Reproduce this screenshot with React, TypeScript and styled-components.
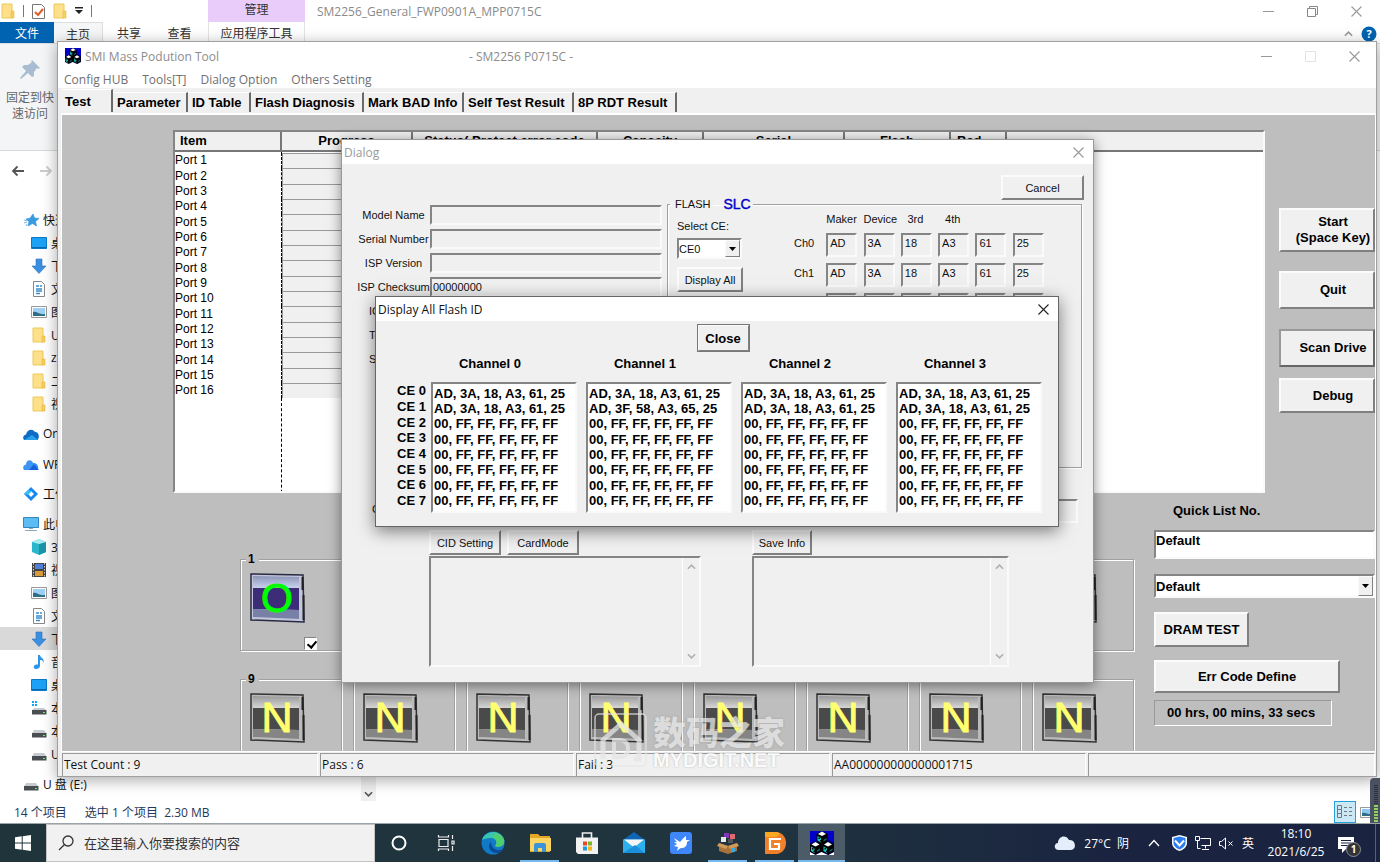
import React from "react";
import styled, { createGlobalStyle, css } from "styled-components";

const uiFont = `"Open Sans", "Noto Sans CJK SC", sans-serif`;
const dlgFont = `"Liberation Sans", "Noto Sans CJK SC", sans-serif`;

const Global = createGlobalStyle`
  * { box-sizing: border-box; }
  html, body { margin: 0; height: 100%; overflow: hidden; }
  body { font-family: ${uiFont}; font-size: 12px; color: #111; }
  button, input, select, textarea { font: inherit; color: inherit; margin: 0; border-radius: 0; }
  svg { display: block; flex: none; }
`;

const sunken = css`
  border: 2px solid;
  border-color: #858585 #fafafa #fafafa #858585;
`;
const raised = css`
  border: 2px solid;
  border-color: #fbfbfb #808080 #808080 #fbfbfb;
`;

/* ---------- desktop ---------- */
const Desktop = styled.div`
  position: relative;
  display: flex;
  flex-direction: column;
  height: 100vh;
  overflow: hidden;
  background: #fff;
`;
const Explorer = styled.section`
  flex: 1;
  min-height: 0;
  display: flex;
  flex-direction: column;
`;
const ExpTitle = styled.header`
  display: flex;
  align-items: center;
  height: 22px;
  color: #8a8a8a;
`;
const QuickBar = styled.div`
  display: flex;
  align-items: center;
  gap: 8px;
  width: 208px;
  padding-left: 1px;
`;
const Sep = styled.i`
  width: 1px;
  height: 12px;
  background: #777;
`;
const ToolTab = styled.div`
  width: 97px;
  height: 22px;
  line-height: 19px;
  text-align: center;
  background: #e9ccfa;
  color: #333;
`;
const ExpName = styled.div`
  flex: 1;
  padding-left: 12px;
`;
const WinControls = styled.div<{ $end: number }>`
  display: flex;
  gap: 24px;
  margin-right: ${(p) => p.$end}px;
`;
const IconButton = styled.button`
  display: flex;
  align-items: center;
  justify-content: center;
  width: 20px;
  height: 20px;
  padding: 0;
  border: 0;
  background: none;
`;
const ExpTabs = styled.nav`
  display: flex;
  height: 21px;
  line-height: 24px;
`;
const ExpTab = styled.button<{ $w: number; $kind?: "file" | "on" | "tool" }>`
  width: ${(p) => p.$w}px;
  padding: 0;
  border: 0;
  background: #fff;
  color: #333;
  ${(p) => p.$kind === "file" && "background:#0063b1;color:#fff;"}
  ${(p) => p.$kind === "on" && "background:#f5f6f7;border-right:1px solid #ddd;border-top:1px solid #ddd;"}
  ${(p) => p.$kind === "tool" && "border:1px solid #e4e4e4;border-width:0 1px;margin-left:4px;"}
`;
const TabsEnd = styled.div`
  flex: 1;
  display: flex;
  justify-content: flex-end;
  align-items: center;
  gap: 8px;
  padding: 3px 3px 0 0;
`;
const Ribbon = styled.div`
  height: 108px;
  border-top: 1px solid #ddd;
  border-bottom: 1px solid #d8d8d8;
  background: #f4f5f6;
`;
const PinTool = styled.div`
  display: flex;
  flex-direction: column;
  align-items: center;
  width: 60px;
  padding-top: 15px;
  gap: 9px;
  color: #666;
  line-height: 16px;
  text-align: center;
`;
const NavRow = styled.div`
  display: flex;
  gap: 14px;
  height: 57px;
  padding: 13px 11px;
`;
const Tree = styled.ul`
  flex: 1;
  min-height: 0;
  width: 360px;
  margin: 0;
  padding: 0;
  list-style: none;
`;
const TreeItem = styled.li<{ $deep?: boolean; $gap?: boolean; $on?: boolean }>`
  display: flex;
  align-items: center;
  gap: 4px;
  height: 23px;
  margin-top: ${(p) => (p.$gap ? 7 : 0)}px;
  padding-left: ${(p) => (p.$deep ? 31 : 23)}px;
  background: ${(p) => (p.$on ? "#d9d9d9" : "transparent")};
`;
const ExpFoot = styled.footer`
  display: flex;
  align-items: center;
  height: 23px;
  color: #1e395b;
`;
const FootText = styled.span<{ $pad: number }>`
  padding-left: ${(p) => p.$pad}px;
`;
const FootRight = styled.div`
  margin-left: auto;
  display: flex;
  align-items: flex-end;
  gap: 4px;
  height: 22px;
`;
const ViewBtn = styled.button`
  display: flex;
  align-items: center;
  justify-content: center;
  width: 22px;
  height: 22px;
  padding: 0;
  border: 1px solid #26a0da;
  background: #cbe8f6;
`;
const Meter = styled.div`
  position: absolute;
  right: 0;
  bottom: 39px;
  width: 10px;
  height: 45px;
  padding: 7px 2px 1px 4px;
  border-radius: 4px 0 0 0;
  background: #4a5160;
`;
const ScrollHint = styled.div`
  position: absolute;
  left: 361px;
  bottom: 61px;
  width: 15px;
  height: 25px;
  display: flex;
  align-items: flex-end;
  justify-content: center;
  padding-bottom: 4px;
  background: #f0f0f0;
`;

/* ---------- main tool window ---------- */
const MainWin = styled.section`
  position: absolute;
  left: 57px;
  right: 3px;
  top: 41px;
  bottom: 85px;
  display: flex;
  flex-direction: column;
  border: 1px solid #a0a0a0;
  background: #f0f0f0;
  box-shadow: 0 3px 14px rgba(0, 0, 0, 0.35);
`;
const MainTitle = styled.header`
  display: flex;
  align-items: center;
  gap: 4px;
  height: 28px;
  padding-left: 7px;
  background: #fff;
  color: #8c8c8c;
`;
const TitleName = styled.span`
  width: 380px;
`;
const TitleRev = styled.span`
  flex: 1;
`;
const MenuBar = styled.nav`
  display: flex;
  gap: 14px;
  height: 18px;
  padding-left: 6px;
  line-height: 20px;
  background: #fff;
  color: #6f6f6f;
`;
const MenuItem = styled.button`
  padding: 0;
  border: 0;
  background: none;
`;
const TabStrip = styled.div`
  display: flex;
  align-items: flex-end;
  height: 24px;
  padding-left: 4px;
  font: bold 13px ${dlgFont};
`;
const Tab = styled.button<{ $w: number; $on?: boolean }>`
  width: ${(p) => p.$w}px;
  height: ${(p) => (p.$on ? 23 : 20)}px;
  padding: 0 0 0 ${(p) => (p.$on ? 3 : 4)}px;
  text-align: left;
  border: 0;
  border-right: 2px solid #6a6a6a;
  border-top: 1px solid #fff;
  background: #f0f0f0;
  color: #000;
  white-space: nowrap;
  line-height: 19px;
`;
const Page = styled.div`
  flex: 1;
  min-height: 0;
  display: flex;
  flex-direction: column;
  margin: 1px 0 0 3px;
  padding: 15px 0 0 0;
  border: solid #fff;
  border-width: 2px 1px 1px 1px;
  overflow: hidden;
  background: #bebebe;
  font: bold 13px ${dlgFont};
  color: #000;
`;
const TopArea = styled.div`
  display: flex;
  gap: 14px;
  margin-left: 111px;
`;
const ListView = styled.div`
  flex: 1;
  min-width: 0;
  height: 363px;
  overflow: hidden;
  ${sunken}
  background: #fff;
`;
const PortTable = styled.table`
  width: 100%;
  table-layout: fixed;
  border-collapse: separate;
  border-spacing: 0;
  th {
    height: 20px;
    padding: 0;
    line-height: 16px;
    font-size: 13px;
    border-right: 2px solid #777;
    border-bottom: 2px solid #777;
    background: #f0f0f0;
    white-space: nowrap;
    overflow: hidden;
  }
  th:first-child { text-align: left; padding-left: 5px; }
  th:nth-child(7) { text-align: left; padding-left: 6px; }
  th:last-child { border-right: 0; }
  td { padding: 0; height: 15px; line-height: 15px; font-weight: normal; font-size: 12px; }
  tr:nth-child(3n) td { height: 16px; }
  td:first-child { border-right: 1px dashed #000; }
  td.bar { background: #f0f0f0; border-top: 1px solid #999; border-left: 1px solid #999; }
  tr.lead td { height: 1px; }
  tr.fill td { height: 110px; }
`;
const Actions = styled.div`
  display: flex;
  flex-direction: column;
  width: 96px;
  padding-top: 78px;
`;
const BigBtn = styled.button<{ $h: number; $mt?: number; $w?: number; $pl?: number; $dark?: boolean }>`
  flex: none;
  height: ${(p) => p.$h}px;
  width: ${(p) => (p.$w ? p.$w + "px" : "100%")};
  margin-top: ${(p) => p.$mt || 0}px;
  padding: 0 0 0 ${(p) => p.$pl || 0}px;
  line-height: 16px;
  white-space: nowrap;
  ${raised}
  ${(p) => p.$dark && "border-color:#999 #666 #666 #999;"}
  background: #f0f0f0;
`;
const LowArea = styled.div`
  display: flex;
  gap: 20px;
  margin-left: 178px;
`;
const Ports = styled.div`
  flex: 1;
  display: grid;
  grid-template-columns: repeat(8, 1fr);
  grid-auto-rows: 100px;
  gap: 20px 11px;
  padding-top: 58px;
`;
const PortBox = styled.fieldset`
  min-width: 0;
  margin: 0;
  padding: 6px 0 0 9px;
  border: 1px solid #a0a0a0;
  box-shadow: 1px 1px 0 #fff, inset 1px 1px 0 #fff;
  legend {
    padding: 0 4px 0 2px;
    margin-left: -4px;
    line-height: 16px;
    font-size: 12px;
    background: #bebebe;
  }
`;
const Tick = styled.input`
  appearance: none;
  display: block;
  width: 13px;
  height: 13px;
  margin: 14px 0 0 54px;
  ${sunken}
  border-width: 1px;
  background: #fff;
  position: relative;
  &:checked::after {
    content: "";
    position: absolute;
    left: 4px;
    top: 1px;
    width: 4px;
    height: 7px;
    border: solid #000;
    border-width: 0 2px 2px 0;
    transform: rotate(40deg);
  }
`;
const Settings = styled.div`
  width: 221px;
  display: flex;
  flex-direction: column;
  padding-top: 10px;
  label { padding-left: 19px; line-height: 16px; }
`;
const NameInput = styled.input`
  height: 29px;
  margin-top: 11px;
  padding: 0 0 8px 0;
  ${sunken}
  background: #fff;
`;
const SelectBox = styled.div<{ $mt?: number; $h: number; $w?: number }>`
  display: flex;
  height: ${(p) => p.$h}px;
  width: ${(p) => (p.$w ? p.$w + "px" : "auto")};
  margin-top: ${(p) => p.$mt || 0}px;
  ${sunken}
  background: #fff;
  select {
    flex: 1;
    min-width: 0;
    appearance: none;
    padding: 0;
    border: 0;
    background: #fff;
  }
`;
const DropArrow = styled.span`
  display: flex;
  align-items: center;
  justify-content: center;
  width: 15px;
  ${raised}
  border-width: 1px;
  background: #f0f0f0;
`;
const Timer = styled.output`
  height: 26px;
  width: 178px;
  margin-top: 7px;
  padding-left: 12px;
  line-height: 24px;
  border: 1px solid;
  border-color: #999 #fff #fff #999;
`;
const StatusBar = styled.footer`
  display: grid;
  grid-template-columns: 256px repeat(3, 254px) 1fr;
  gap: 2px;
  height: 23px;
  margin: 1px 1px 0 4px;
  span {
    padding-left: 1px;
    line-height: 22px;
    border-left: 1px solid #999;
    border-top: 1px solid #999;
    border-right: 1px solid #fff;
  }
`;

/* ---------- dialogs ---------- */
const DialogWin = styled.section`
  position: absolute;
  left: 341px;
  top: 139px;
  width: 753px;
  height: 544px;
  border: 1px solid #999;
  background: #f0f0f0;
  box-shadow: 0 2px 12px rgba(0, 0, 0, 0.45);
  font: 11px ${dlgFont};
`;
const DlgTitle = styled.header<{ $dim?: boolean }>`
  display: flex;
  align-items: center;
  justify-content: space-between;
  height: 24px;
  padding: 0 5px 0 2px;
  background: #fff;
  font: 12px ${uiFont};
  color: ${(p) => (p.$dim ? "#9a9a9a" : "#111")};
`;
const Btn = styled.button<{ $w: number }>`
  width: ${(p) => p.$w}px;
  height: 25px;
  padding: 0;
  font-size: 11px;
  ${raised}
  background: #f0f0f0;
`;
const CancelRow = styled.div`
  display: flex;
  justify-content: flex-end;
  padding: 11px 9px 0 0;
`;
const InfoArea = styled.div`
  display: flex;
  gap: 5px;
  height: 299px;
`;
const Form = styled.div`
  display: grid;
  grid-template-columns: 73px 232px;
  grid-auto-rows: 20px;
  row-gap: 4px;
  align-content: start;
  padding: 5px 0 0 15px;
  label { line-height: 20px; text-align: center; white-space: nowrap; }
  label.left { text-align: left; padding-left: 12px; }
`;
const Field = styled.input`
  min-width: 0;
  width: 100%;
  padding: 0 1px;
  ${sunken}
  background: #f0f0f0;
`;
const Flash = styled.fieldset`
  flex: 1;
  align-self: flex-start;
  min-width: 0;
  height: 272px;
  margin: -4px 11px 0 0;
  padding: 0 0 0 9px;
  border: 1px solid #a0a0a0;
  box-shadow: 1px 1px 0 #fff, inset 1px 1px 0 #fff;
  legend {
    display: flex;
    align-items: center;
    margin-left: -7px;
    height: 16px;
  }
  legend span { padding: 0 3px; background: #f0f0f0; }
  legend b { margin-left: 10px; font-size: 14px; font-weight: normal; -webkit-text-stroke: 0.4px #0000c8; color: #0000c8; background: #f0f0f0; }
`;
const FlashBody = styled.div`
  display: flex;
  gap: 51px;
`;
const CePick = styled.div`
  display: flex;
  flex-direction: column;
  align-items: flex-start;
  padding-top: 6px;
  label { line-height: 16px; margin-bottom: 4px; }
  button { margin-top: 8px; }
`;
const IdTable = styled.table`
  width: 256px;
  flex: none;
  align-self: flex-start;
  table-layout: fixed;
  border-collapse: separate;
  border-spacing: 0;
  margin-top: -5px;
  th { padding: 0; font-weight: normal; white-space: nowrap; text-align: center; }
  thead td { height: 23px; width: 32px; padding: 0; }
  thead th { width: 37px; height: 23px; vertical-align: bottom; line-height: 16px; padding: 0 8px 3px 0; }
  tbody th { height: 30px; text-align: left; padding-bottom: 4px; }
  td { padding: 0 6px 0 0; height: 30px; }
  input { display: block; width: 31px; height: 24px; padding: 0 0 4px 2px; }
`;
const LowField = styled.div`
  display: grid;
  grid-template-columns: 58px 1fr;
  height: 20px;
  padding: 0 15px 0 30px;
  line-height: 20px;
`;
const Cards = styled.div`
  display: flex;
  gap: 51px;
  padding: 11px 0 0 87px;
`;
const BtnRow = styled.div`
  display: flex;
  gap: 6px;
  margin-bottom: 1px;
`;
const MemoBox = styled.div<{ $w: number }>`
  display: flex;
  width: ${(p) => p.$w}px;
  height: 111px;
  ${sunken}
  textarea {
    flex: 1;
    min-width: 0;
    resize: none;
    border: 0;
    border-right: 1px solid #fff;
    background: #f0f0f0;
    overflow: hidden;
  }
`;
const Gutter = styled.div`
  display: flex;
  flex-direction: column;
  justify-content: space-between;
  align-items: center;
  width: 16px;
  padding: 6px 0;
`;

const FlashWin = styled.section`
  position: absolute;
  left: 375px;
  top: 296px;
  width: 684px;
  height: 231px;
  border: 1px solid #666;
  background: #f0f0f0;
  box-shadow: 0 4px 16px rgba(0, 0, 0, 0.5);
  font: bold 13px ${dlgFont};
  color: #000;
`;
const CloseRow = styled.div`
  display: flex;
  justify-content: center;
  padding: 3px 0 0 12px;
  button {
    width: 53px;
    height: 28px;
    padding: 0;
    ${raised}
    outline: 1px solid #777;
    outline-offset: -1px;
    background: #f0f0f0;
  }
`;
const Channels = styled.div`
  display: flex;
  gap: 9px;
  padding: 3px 0 0 21px;
`;
const CeNames = styled.div`
  width: 25px;
  flex: none;
  padding-top: 27px;
  white-space: nowrap;
  div { height: 16px; line-height: 18px; }
  div:nth-child(3n) { height: 15px; }
`;
const Channel = styled.section`
  width: 146px;
  h3 { margin: 0; height: 27px; line-height: 18px; font-size: 13px; text-align: center; padding-right: 28px; }
`;
const IdList = styled.ol`
  height: 131px;
  margin: 0;
  padding: 2px 0 0 1px;
  list-style: none;
  white-space: nowrap;
  ${sunken}
  background: #fff;
  li { height: 15px; line-height: 16px; }
  li:nth-child(3n) { height: 16px; }
`;

/* ---------- watermark ---------- */
const Mark = styled.div`
  position: absolute;
  left: 594px;
  top: 713px;
  display: flex;
  gap: 6px;
  color: #e6e6e6;
  opacity: 0.75;
  font-family: "Noto Sans CJK SC", sans-serif;
  font-weight: bold;
  text-shadow: 0 0 2px rgba(110, 110, 110, 0.6);
  pointer-events: none;
  div { display: flex; flex-direction: column; }
  strong { font-size: 33px; line-height: 36px; }
  em { font: bold 20px/22px "Liberation Sans", sans-serif; color: #fff; }
`;

/* ---------- taskbar ---------- */
const Taskbar = styled.footer`
  display: flex;
  height: 39px;
  border-top: 1px solid #9aa3a8;
  background: linear-gradient(90deg, #20343c, #20343f 55%, #1a2440 80%, #1a2440);
  color: #fff;
`;
const StartBtn = styled.button`
  display: flex;
  align-items: center;
  justify-content: center;
  width: 46px;
  padding: 0;
  border: 0;
  background: none;
`;
const Search = styled.label`
  display: flex;
  align-items: center;
  gap: 10px;
  width: 329px;
  padding-left: 11px;
  border: 1px solid #c4c4c4;
  background: #f1f1f1;
  color: #333;
  input { flex: 1; border: 0; padding: 0; background: none; font-size: 13px; }
  input::placeholder { color: #333; opacity: 1; }
`;
const TaskBtn = styled.button<{ $run?: boolean; $on?: boolean }>`
  display: flex;
  align-items: center;
  justify-content: center;
  width: 47px;
  padding: 0;
  border: 0;
  background: ${(p) => (p.$on ? "#4b5c68" : "none")};
  position: relative;
  &::after {
    content: "";
    position: absolute;
    bottom: 0;
    left: ${(p) => (p.$on ? 0 : 4)}px;
    right: ${(p) => (p.$on ? 0 : 4)}px;
    height: ${(p) => (p.$run ? 2 : 0)}px;
    background: #76b9ed;
  }
`;
const Tray = styled.div`
  display: flex;
  align-items: center;
  margin-left: auto;
  gap: 8px;
  white-space: nowrap;
`;
const Clock = styled.time`
  width: 68px;
  text-align: center;
  font-size: 12px;
  line-height: 18px;
`;
const Notify = styled.button`
  position: relative;
  width: 38px;
  height: 38px;
  padding: 4px 0 0 0;
  border: 0;
  border-right: 1px solid #55607a;
  background: none;
  margin-right: 4px;
  b {
    position: absolute;
    left: 8px;
    top: 18px;
    width: 15px;
    height: 15px;
    border-radius: 8px;
    border: 1px solid #8a8f98;
    background: #333;
    font-size: 10px;
    line-height: 13px;
    text-align: center;
    color: #fff;
  }
`;

/* ---------- icons ---------- */
const Cross = ({ c = "#999" }: { c?: string }) => (
  <svg width="11" height="11" viewBox="0 0 11 11" stroke={c} strokeWidth="1.1"><path d="M.5.5l10 10M10.5.5l-10 10" /></svg>
);
const Dash = () => <svg width="11" height="11" viewBox="0 0 11 11" stroke="#999"><path d="M0 5.5h11" /></svg>;
const Restore = () => (
  <svg width="11" height="11" viewBox="0 0 11 11" fill="none" stroke="#888"><path d="M.5 2.5h8v8h-8zM2.500 2.500v-2h8v8h-2" /></svg>
);
const Square = () => <svg width="11" height="11" viewBox="0 0 11 11" fill="none" stroke="#e2e2e2"><path d="M.5.5h10v10H.5z" /></svg>;
const Chev = ({ up, c = "#b0b0b0", w = 9 }: { up?: boolean; c?: string; w?: number }) => (
  <svg width={w} height="6" viewBox="0 0 10 6" fill="none" stroke={c} strokeWidth="1.8"><path d={up ? "M1 5l4-4 4 4" : "M1 1l4 4 4-4"} /></svg>
);
const Down = () => <svg width="7" height="4" viewBox="0 0 7 4"><path d="M0 0h7L3.500 4z" /></svg>;
const Folder = () => (
  <svg width="14" height="16" viewBox="0 0 14 16"><path d="M1 1h10v14H1z" fill="#ffe08a" stroke="#edc85a" /><path d="M10 8h3v7h-3z" fill="#f6cf5c" stroke="#e6bb45" strokeWidth=".6" /></svg>
);
const cubeSpots = [[6.5, 0], [0, 10.5], [12.5, 10.5]];
const Cubes = ({ s = 16 }: { s?: number }) => (
  <svg width={s} height={s} viewBox="0 0 24 24">
    <path d="M0 0h24v24H0z" fill="#0000c8" />
    <path d="M0 12l7-4M17 8l7 4v12H0V12" fill="#00006a" />
    <path d="M7 12l5-2 5 2v9H7z" fill="#000" />
    {cubeSpots.map(([x, y], i) => (
      <g key={i} transform={`translate(${x} ${y})`}>
        <path d="M0 3l5.500-3L11 3v7l-5.500 3L0 10z" fill="#000" />
        <path d="M1.500 3L5.500.5l4 2.500-4 2z" fill="#fff" />
        <path d="M1 5l3.500 2v4.500L1 9.500z" fill="#18c8c0" />
        <path d="M2 6.500h1.500v1.500H2zM3.500 9H5v1.500H3.500z" fill="#000" />
        <path d="M7 9l3-2v1.500l-3 2z" fill="#18c8c0" opacity=".6" />
      </g>
    ))}
    <path d="M0 21l5.500 3H0zM24 21l-5.500 3H24zM5.500 24l6-3 6.500 3z" fill="#fff" />
  </svg>
);
const Pin = () => (
  <svg width="22" height="22" viewBox="0 0 22 22" fill="#a9bdd2"><path d="M13 1l8 8-2 1-1-1-3 4v4l-2 1-4-4-7 6-1-1 6-7-4-4 2-2h4l4-3-1-1z" /></svg>
);
const Arrow = ({ flip, c }: { flip?: boolean; c: string }) => (
  <svg width="14" height="14" viewBox="0 0 14 14" fill="none" stroke={c} strokeWidth="1.800"><path d={flip ? "M1 7h11M7.500 2.500L12 7l-4.500 4.500" : "M13 7H2M6.500 2.500L2 7l4.500 4.500"} /></svg>
);

const TreeIcon = ({ k }: { k: string }) => {
  const art: Record<string, React.ReactNode> = {
    star: <path d="M10 2l1.500 4 4.500.5-3.500 3 1 4.500-4-2.500L5 14l1-4.500L3 7l4-.8zM1 8l3 1M1 11l3-1M3 14l1-2" fill="#3a9ae0" stroke="#3a9ae0" strokeWidth=".7" />,
    desk: <><path d="M.5 2.500h15v11H.5z" fill="#1ba1f5" stroke="#0b78c8" /><path d="M1 12.500h14" stroke="#0a68b0" /></>,
    down: <path d="M5 1h6v7h4l-7 7.500L1 8h4z" fill="#3b8fe0" stroke="#2b74bd" strokeWidth=".6" />,
    doc: <><path d="M2.500.5h8l3 3v12h-11z" fill="#fff" stroke="#888" /><path d="M5 5h3M9 5h2M5 8h6M5 10h6M5 12.500h4" stroke="#3a8fd0" strokeWidth="1.300" /></>,
    pic: <><path d="M.5 2.500h15v11H.5z" fill="#fff" stroke="#999" /><path d="M2 4h12v8H2z" fill="#9fd0f5" /><path d="M2 8c4-1 6 3 12 2v2H2z" fill="#2f6f86" /></>,
    cloud: <><path d="M1 14c-2-3 0-5 2-5.500C4 4 9 2 12 6c4 0 5 5 2.500 8z" fill="#0f6cc4" /><path d="M1 14l8-5 6 5z" fill="#28a0ea" /></>,
    wps: <><path d="M1 14c-2-3 0-5 2-5.500C3 3 9 3 10 7c5 0 6 4 4.500 7z" fill="#3f95f6" /><path d="M6 14l5-6 5 6z" fill="#1464e0" /></>,
    work: <><path d="M8 1l7 7-7 7-7-7z" fill="#1687f0" /><path d="M8 5l3 3-3 3-3-3z" fill="#fff" /><path d="M1 8l4-4 4 1-4 4z" fill="#35c0f5" /></>,
    pc: <><path d="M.5 1.500h15v10H.5z" fill="#5ebcf5" stroke="#3486c0" /><path d="M6 12h4v1H6zM2 14h12v1H2z" fill="#8ab" /></>,
    cube: <><path d="M8 0l7 3v10l-7 3-7-3V3z" fill="#2bb6cb" /><path d="M8 5l7-2v10l-7 3z" fill="#1a94a8" /><path d="M1 3l7-3 7 3-7 2z" fill="#a8ebf0" /></>,
    film: <><path d="M1 1h14v14H1z" fill="#444" /><path d="M4 2h8v5H4z" fill="#4f80d8" /><path d="M4 9h8v5H4z" fill="#d79b3a" /><path d="M2.500 1v14M13.500 1v14" stroke="#ccc" strokeDasharray="1.500 1.500" /></>,
    music: <path d="M7 1h2c0 3 5 3 3.500 8-.5-3-2-3-3.500-3v6c0 3-5 4-6 2s1-4 4-3.500z" fill="#2c95e8" />,
    disk: <><path d="M3 7h10l2.500 3.500H1z" fill="#c8cbd0" /><path d="M1 10h14.500v4.500H1z" fill="#4a4d52" /><path d="M12 12h2v1h-2z" fill="#5f5" /></>,
    win: <><path d="M1 1h2v2H1zM4 1h2v2H4zM1 4h2v2H1zM4 4h2v2H4z" fill="#12a5f0" /><path d="M3 8h10l2.500 2.500H1z" fill="#c8cbd0" /><path d="M1 10h14.500v4.500H1z" fill="#4a4d52" /><path d="M12 12h2v1h-2z" fill="#5f5" /></>,
    folder: <><path d="M2 1h10v14H2z" fill="#ffe08a" stroke="#edc85a" /><path d="M11 9h3v6h-3z" fill="#f6cf5c" stroke="#e6bb45" strokeWidth=".6" /></>,
  };
  return <svg width="16" height="16" viewBox="0 0 16 16">{art[k]}</svg>;
};

const Led = ({ ok }: { ok?: boolean }) => (
  <svg width="55" height="50" viewBox="0 0 55 50">
    <defs>
      <linearGradient id={ok ? "gOk" : "gNo"} x1="0" y1="0" x2="0" y2="1">
        <stop offset="0" stopColor={ok ? "#8d95b8" : "#9a9a9a"} /><stop offset=".28" stopColor={ok ? "#c9d2ec" : "#d6d6d6"} />
      </linearGradient>
    </defs>
    <path d="M1 1l52 1 1 47-53-2z" fill={ok ? "#c2c6d8" : "#bbb"} stroke={ok ? "#2a2a45" : "#333"} strokeWidth="1.500" />
    <path d="M3 3l46 1v42L3 44z" fill={`url(#${ok ? "gOk" : "gNo"})`} />
    <path d="M3 15h46v22l-46-1z" fill={ok ? "#3d2c78" : "#4a4a4a"} />
    <path d="M3 36l46 1v9L3 44z" fill={ok ? "#7880a8" : "#858585"} />
    <path d="M52.500 4v13M53.500 22v25" stroke="#222" strokeWidth="2" />
    <text x="27" y="39" textAnchor="middle" fontFamily="Liberation Sans, sans-serif" fontWeight="normal" fontSize={ok ? 41 : 43} fill={ok ? "#0f0" : "#ffff70"} stroke={ok ? "#0f0" : "#ffff70"} strokeWidth="1">{ok ? "O" : "N"}</text>
  </svg>
);

const tasks: { name: string; run?: boolean; art: React.ReactNode }[] = [
  { name: "Cortana", art: <circle cx="12" cy="12" r="6.500" fill="none" stroke="#fff" strokeWidth="2" /> },
  { name: "Task view", art: <path d="M5 8.500h9v7H5zM4.500 4v2h10V4M4.500 20v-2h10v2M18.500 4v4M18.500 15v5M18 10h2v3h-2z" fill="none" stroke="#eee" strokeWidth="1.200" /> },
  { name: "Edge", art: <><circle cx="12" cy="12" r="11.500" fill="#1079c8" /><path d="M1 9C4-1 19-2 23 8c2 7-5 9-9 7 3-3 1-8-4-8-4 0-7 1-9 2z" fill="#38c6b0" /><path d="M14 2c8 1 11 9 8 12-3 3-8 2-8 1 3-3 1-8-2-8z" fill="#58d05a" opacity=".75" /><path d="M10 11c-5 4 0 12 7 11 2 0 4-2 5-4-5 3-12 0-12-7z" fill="#0c4a94" /></> },
  { name: "Explorer", run: true, art: <><path d="M2 3h8l2 2h10v16H2z" fill="#e5a825" /><path d="M2 7h21v13H2z" fill="#fcd462" /><path d="M6 21v-7q0-2 2-2h8q2 0 2 2v7h-4v-4h-4v4z" fill="#3a94d8" /></> },
  { name: "Store", art: <><path d="M7.500 7V2h9v5" fill="none" stroke="#eee" strokeWidth="1.600" /><path d="M1 6.500h22V23H3L1 21z" fill="#f2f2f2" /><path d="M8 10.500h4v4H8z" fill="#e8482a" /><path d="M13 10.500h4v4h-4z" fill="#7ab62c" /><path d="M8 15.500h4v4H8z" fill="#1f9be0" /><path d="M13 15.500h4v4h-4z" fill="#f6b515" /></> },
  { name: "Mail", art: <><path d="M1 9l11-8 11 8z" fill="#0f65b5" /><path d="M1 8.500h22V22H1z" fill="#2fb0ee" /><path d="M2 8.500h20l-10 8z" fill="#f5f5f5" /><path d="M1 22l12-8 10 8z" fill="#1a90dc" /></> },
  { name: "Bird", art: <><rect x="1" y="1" width="22" height="22" rx="3" fill="#3f86f8" /><path d="M5 7l6 4c2-2 3-4 6-6l0 4h4l-3 2c0 4-2 6-6 6-2 1-3 2-4 3l1-4-4-1 3-2-3-2 3 0c-1-1-2-2-3-4z" fill="#fff" /></> },
  { name: "Box", run: true, art: <><path d="M3 12l9 3 9-3v8l-9 3-9-3z" fill="#a8723a" /><path d="M3 12l-2 3 9 3 2-3 2 3 9-3-2-3-9 3z" fill="#d09a58" /><path d="M8 2h5v5H8z" fill="#8038b8" /><path d="M14 3h5v5h-5z" fill="#e06a70" /><path d="M5 6h5v5H5z" fill="#e8e8e8" /><path d="M12 8h5v4h-5z" fill="#555" /><path d="M15 17h4v4h-4z" fill="#38a8e0" /></> },
  { name: "DiskGenius", run: true, art: <><path d="M2 1h12c12 2 12 20 0 22H2z" fill="#f0802a" /><path d="M2 1h12l3 2-4 3H2z" fill="#f9a820" /><path d="M18 8H7v10h9v-5h-5" fill="none" stroke="#fff" strokeWidth="2.200" /></> },
];

const quick = [["star", "快速访问", 0], ["desk", "桌面", 1], ["down", "下载", 1], ["doc", "文档", 1], ["pic", "图片", 1], ["folder", "U 盘", 1], ["folder", "z", 1], ["folder", "二维", 1], ["folder", "视频", 1]] as const;
const clouds = [["cloud", "OneDrive"], ["wps", "WPS 网盘"], ["work", "工作空间"]] as const;
const devices = [["cube", "3D 对象"], ["film", "视频"], ["pic", "图片"], ["doc", "文档"], ["down", "下载"], ["music", "音乐"], ["desk", "桌面"], ["win", "本地磁盘"], ["disk", "本地磁盘"], ["disk", "U 盘"]] as const;

const tabs: [string, number][] = [["Parameter", 75], ["ID Table", 63], ["Flash Diagnosis", 113], ["Mark BAD Info", 100], ["Self Test Result", 110], ["8P RDT Result", 103]];
const cols: [string, number | undefined][] = [["Item", 107], ["Progress", 131], ["Status( Protect error code", 185], ["Capacity", 106], ["Serial", 141], ["Flash", 106], ["Bad", 56], ["", undefined]];
const ids = ["AD", "3A", "18", "A3", "61", "25"];
const good = ids.join(", ");
const empty = "00, FF, FF, FF, FF, FF";
const channels = [good, "AD, 3F, 58, A3, 65, 25", good, good];

const Memo = ({ w, name }: { w: number; name: string }) => (
  <MemoBox $w={w}><textarea aria-label={name} readOnly /><Gutter><Chev up /><Chev /></Gutter></MemoBox>
);

export default function App() {
  return (
    <Desktop>
      <Global />
      <Explorer>
        <ExpTitle>
          <QuickBar>
            <Folder /><Sep />
            <svg width="13" height="15" viewBox="0 0 13 15" fill="none"><path d="M.5.5h9l3 3v11H.5z" fill="#fff" stroke="#777" /><path d="M3 8l3 3 5-6" stroke="#e05a2a" strokeWidth="2" /></svg>
            <Folder />
            <svg width="8" height="8" viewBox="0 0 8 8" fill="#222"><path d="M0 0h8v1.500H0zM0 3h8L4 7z" /></svg>
            <Sep />
          </QuickBar>
          <ToolTab>管理</ToolTab>
          <ExpName>SM2256_General_FWP0901A_MPP0715C</ExpName>
          <WinControls $end={14}>
            <IconButton aria-label="Minimize"><Dash /></IconButton>
            <IconButton aria-label="Restore"><Restore /></IconButton>
            <IconButton aria-label="Close"><Cross /></IconButton>
          </WinControls>
        </ExpTitle>
        <ExpTabs>
          <ExpTab $w={54} $kind="file">文件</ExpTab>
          <ExpTab $w={49} $kind="on">主页</ExpTab>
          <ExpTab $w={52}>共享</ExpTab>
          <ExpTab $w={49}>查看</ExpTab>
          <ExpTab $w={97} $kind="tool">应用程序工具</ExpTab>
          <TabsEnd>
            <Chev up c="#999" />
            <svg width="16" height="16" viewBox="0 0 16 16"><circle cx="8" cy="8" r="7.500" fill="#0063b1" /><text x="8" y="12" textAnchor="middle" fontSize="11" fontWeight="bold" fill="#fff" fontFamily="Open Sans">?</text></svg>
          </TabsEnd>
        </ExpTabs>
        <Ribbon><PinTool><Pin /><span>固定到快<br />速访问</span></PinTool></Ribbon>
        <NavRow><Arrow c="#555" /><Arrow flip c="#ccc" /></NavRow>
        <Tree>
          {quick.map(([k, t, d], i) => <TreeItem key={i} $deep={!!d}><TreeIcon k={k} />{t}</TreeItem>)}
          {clouds.map(([k, t]) => <TreeItem key={k} $gap><TreeIcon k={k} />{t}</TreeItem>)}
          <TreeItem $gap><TreeIcon k="pc" />此电脑</TreeItem>
          {devices.map(([k, t], i) => <TreeItem key={i} $deep $on={k === "down"}><TreeIcon k={k} />{t}</TreeItem>)}
          <TreeItem $gap><TreeIcon k="disk" />U 盘 (E:)</TreeItem>
        </Tree>
        <ExpFoot>
          <FootText $pad={14}>14 个项目</FootText>
          <FootText $pad={18}>选中 1 个项目&nbsp; 2.30 MB</FootText>
          <FootRight>
            <ViewBtn aria-label="Details view">
              <svg width="16" height="14" viewBox="0 0 16 14" fill="none" stroke="#777"><path d="M.5.5h4v4h-4zM.5 4.500h4v4h-4zM.5 8.500h4v4h-4zM7 2.500h3M12 2.500h3M7 6.500h3M12 6.500h3M7 10.500h3M12 10.500h3" /></svg>
            </ViewBtn>
            <svg width="20" height="20" viewBox="0 0 20 20"><path d="M.5 4.500h14v10H.5z" fill="#fff" stroke="#999" /><path d="M2 6h11v7H2z" fill="#8cc8f5" /><path d="M2 10c4-1 6 2 11 1v2H2z" fill="#2f6f86" /></svg>
          </FootRight>
        </ExpFoot>
      </Explorer>
      <ScrollHint><Chev c="#555" /></ScrollHint>

      <Taskbar>
        <StartBtn aria-label="Start">
          <svg width="16" height="16" viewBox="0 0 16 16" fill="#fff"><path d="M0 2.300l6.700-1v6.200H0zM7.700 1.200L16 0v7.500H7.700zM0 8.500h6.700v6.200l-6.700-1zM7.700 8.500H16V16l-8.300-1.200z" /></svg>
        </StartBtn>
        <Search>
          <svg width="16" height="16" viewBox="0 0 16 16" fill="none" stroke="#333" strokeWidth="1.300"><circle cx="10" cy="6" r="5" /><path d="M6.500 9.500L1 15" /></svg>
          <input placeholder="在这里输入你要搜索的内容" aria-label="Search" />
        </Search>
        {tasks.map((t) => (
          <TaskBtn key={t.name} aria-label={t.name} $run={t.run}><svg width="24" height="24" viewBox="0 0 24 24">{t.art}</svg></TaskBtn>
        ))}
        <TaskBtn aria-label="SMI" $run $on><Cubes s={24} /></TaskBtn>
        <Tray>
          <svg width="22" height="16" viewBox="0 0 22 16"><path d="M5 15C-1 15 0 8 4 8 4 1 12-1 15 5c7-1 8 10 2 10z" fill="#e4eefa" /></svg>
          <span>27°C&nbsp; 阴</span>
          <svg width="27" height="8" viewBox="0 0 27 8" fill="none" stroke="#fff" strokeWidth="1.300"><path d="M12 7l5-5.500L22 7" /></svg>
          <svg width="15" height="16" viewBox="0 0 15 16"><path d="M7.500 0L15 2v6c0 4-4 7-7.500 8C4 15 0 12 0 8V2z" fill="#fff" /><path d="M7.500 1.500L13.500 3v5c0 3-3 5.500-6 6.500C4.500 13.500 1.500 11 1.500 8V3z" fill="#2b7cf0" /><path d="M3 5.500l4.500 5 4.500-5" fill="none" stroke="#fff" strokeWidth="2" /></svg>
          <svg width="16" height="14" viewBox="0 0 16 14" fill="none" stroke="#fff"><path d="M5.500 2.500h10v7h-9M10.500 9.500v3M7 13.500h7M.5.5h4v4h-4zM2.500 4.500v8h3" /></svg>
          <svg width="15" height="14" viewBox="0 0 15 14" fill="none" stroke="#fff"><path d="M.5 5.500h2l4-3.500v11l-4-3.500h-2zM9.500 5.500l4 4M13.500 5.500l-4 4" /></svg>
          <span>英</span>
          <Clock>18:10<br />2021/6/25</Clock>
          <Notify aria-label="Notifications">
            <svg width="16" height="16" viewBox="0 0 16 16"><path d="M0 0h16v12H8l-4 4v-4H0z" fill="#fff" /><path d="M3 3.500h10M3 6h10M3 8.500h7" stroke="#1a2440" /></svg>
            <b>1</b>
          </Notify>
        </Tray>
      </Taskbar>

      <MainWin>
        <MainTitle>
          <Cubes />
          <TitleName>SMI Mass Podution Tool</TitleName>
          <TitleRev>- SM2256 P0715C -</TitleRev>
          <WinControls $end={12}>
            <IconButton aria-label="Minimize"><Dash /></IconButton>
            <IconButton aria-label="Maximize"><Square /></IconButton>
            <IconButton aria-label="Close"><Cross /></IconButton>
          </WinControls>
        </MainTitle>
        <MenuBar>
          {["Config HUB", "Tools[T]", "Dialog Option", "Others Setting"].map((m) => <MenuItem key={m}>{m}</MenuItem>)}
        </MenuBar>
        <TabStrip>
          <Tab $w={51} $on>Test</Tab>
          {tabs.map(([t, w]) => <Tab key={t} $w={w}>{t}</Tab>)}
        </TabStrip>
        <Page>
          <TopArea>
            <ListView>
              <PortTable>
                <colgroup>{cols.map(([t, w]) => <col key={t} width={w} />)}</colgroup>
                <thead><tr>{cols.map(([t]) => <th key={t}>{t}</th>)}</tr></thead>
                <tbody>
                  <tr className="lead"><td /><td colSpan={7} /></tr>
                  {Array.from({ length: 16 }, (_, i) => (
                    <tr key={i}><td>Port {i + 1}</td><td className="bar" /><td colSpan={6} /></tr>
                  ))}
                  <tr className="fill"><td /><td colSpan={7} /></tr>
                </tbody>
              </PortTable>
            </ListView>
            <Actions>
              <BigBtn $h={44} $pl={12}>Start<br />(Space Key)</BigBtn>
              <BigBtn $h={38} $mt={19} $pl={12}>Quit</BigBtn>
              <BigBtn $h={38} $mt={20} $pl={12} $dark>Scan Drive</BigBtn>
              <BigBtn $h={35} $mt={11} $pl={12}>Debug</BigBtn>
            </Actions>
          </TopArea>
          <LowArea>
            <Ports>
              {Array.from({ length: 16 }, (_, i) => (
                <PortBox key={i}>
                  <legend>{i + 1}</legend>
                  <Led ok={i === 0} />
                  {i === 0 && <Tick type="checkbox" defaultChecked aria-label="Enable port 1" />}
                </PortBox>
              ))}
            </Ports>
            <Settings>
              <label htmlFor="quick">Quick List No.</label>
              <NameInput id="quick" defaultValue="Default" />
              <SelectBox $mt={15} $h={24}>
                <select aria-label="Quick list"><option>Default</option></select>
                <DropArrow><Down /></DropArrow>
              </SelectBox>
              <BigBtn $h={35} $w={95} $mt={14}>DRAM TEST</BigBtn>
              <BigBtn $h={33} $w={186} $mt={13}>Err Code Define</BigBtn>
              <Timer>00 hrs, 00 mins, 33 secs</Timer>
            </Settings>
          </LowArea>
        </Page>
        <StatusBar>
          <span>Test Count : 9</span><span>Pass : 6</span><span>Fail : 3</span><span>AA000000000000001715</span><span />
        </StatusBar>
      </MainWin>
      <Meter>
        <svg width="4" height="37" viewBox="0 0 4 37" strokeWidth="4"><path d="M2 0v20" stroke="#2a2f3a" strokeDasharray="1 1" /><path d="M2 20v17" stroke="#8fd060" strokeDasharray="2 1" /></svg>
      </Meter>

      <DialogWin>
        <DlgTitle $dim><span>Dialog</span><IconButton aria-label="Close"><Cross /></IconButton></DlgTitle>
        <CancelRow><Btn $w={83}>Cancel</Btn></CancelRow>
        <InfoArea>
          <Form>
            <label htmlFor="model">Model Name</label><Field id="model" readOnly />
            <label htmlFor="serial">Serial Number</label><Field id="serial" readOnly />
            <label htmlFor="ver">ISP Version</label><Field id="ver" readOnly />
            <label htmlFor="sum">ISP Checksum</label><Field id="sum" readOnly value="00000000" />
            <label className="left" htmlFor="ic">IC</label><Field id="ic" readOnly />
            <label className="left" htmlFor="total">Total</label><Field id="total" readOnly />
            <label className="left" htmlFor="size">Size</label><Field id="size" readOnly />
          </Form>
          <Flash>
            <legend><span>FLASH</span><b>SLC</b></legend>
            <FlashBody>
              <CePick>
                <label htmlFor="ce">Select CE:</label>
                <SelectBox $h={21} $w={65}>
                  <select id="ce"><option>CE0</option></select>
                  <DropArrow><Down /></DropArrow>
                </SelectBox>
                <Btn $w={66}>Display All</Btn>
              </CePick>
              <IdTable>
                <thead><tr><td />{["Maker", "Device", "3rd", "4th", "", ""].map((h, i) => <th key={i}>{h}</th>)}</tr></thead>
                <tbody>
                  {[0, 1, 2].map((r) => (
                    <tr key={r}>
                      <th>Ch{r}</th>
                      {ids.map((v) => <td key={v}><Field readOnly aria-label={`Ch${r} ${v}`} value={v} /></td>)}
                    </tr>
                  ))}
                </tbody>
              </IdTable>
            </FlashBody>
          </Flash>
        </InfoArea>
        <LowField><label htmlFor="cap">Cap</label><Field id="cap" readOnly /></LowField>
        <Cards>
          <div>
            <BtnRow><Btn $w={72}>CID Setting</Btn><Btn $w={72}>CardMode</Btn></BtnRow>
            <Memo w={272} name="CID" />
          </div>
          <div>
            <BtnRow><Btn $w={60}>Save Info</Btn></BtnRow>
            <Memo w={257} name="Info" />
          </div>
        </Cards>
      </DialogWin>

      <FlashWin>
        <DlgTitle><span>Display All Flash ID</span><IconButton aria-label="Close"><Cross c="#222" /></IconButton></DlgTitle>
        <CloseRow><button>Close</button></CloseRow>
        <Channels>
          <CeNames>{channels.concat(channels).map((_, i) => <div key={i}>CE {i}</div>)}</CeNames>
          {channels.map((second, c) => (
            <Channel key={c}>
              <h3>Channel {c}</h3>
              <IdList>
                <li>{good}</li><li>{second}</li>
                {Array.from({ length: 6 }, (_, i) => <li key={i}>{empty}</li>)}
              </IdList>
            </Channel>
          ))}
        </Channels>
      </FlashWin>

      <Mark>
        <svg width="53" height="54" viewBox="0 0 53 54" fill="none" stroke="#e6e6e6">
          <rect x="1" y="1" width="51" height="52" rx="4" strokeWidth="1.500" />
          <path d="M9 46V27L27 11l18 16v19h-5" strokeWidth="5" />
          <path d="M20 27h5q9 0 9 8.500T25 44h-5z" strokeWidth="4" />
        </svg>
        <div><strong>数码之家</strong><em>MYDIGIT.NET</em></div>
      </Mark>
    </Desktop>
  );
}
